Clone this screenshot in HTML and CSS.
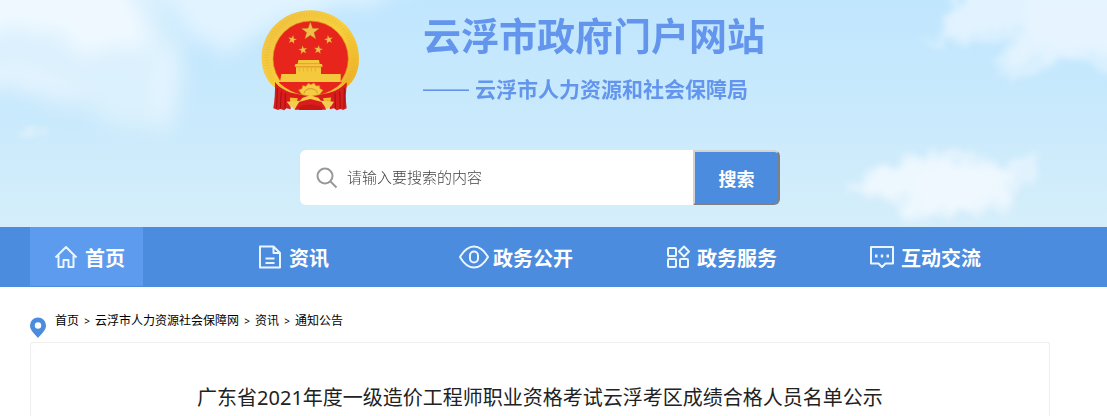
FILE: index.html
```
<!DOCTYPE html>
<html lang="zh-CN">
<head>
    <meta charset="UTF-8">
    <meta name="viewport" content="width=device-width, initial-scale=1.0">
    <title>云浮市人力资源和社会保障局</title>
    <link rel="stylesheet" href="styles.css">
</head>
<body>
    <header class="header">
        <svg class="sky" viewBox="0 0 1107 227" preserveAspectRatio="xMidYMin slice" aria-hidden="true">
            <defs>
                <filter id="haze" x="-30%" y="-30%" width="160%" height="160%">
                    <feTurbulence type="fractalNoise" baseFrequency="0.02" numOctaves="3" seed="8" result="noise"/>
                    <feDisplacementMap in="SourceGraphic" in2="noise" scale="40" xChannelSelector="R" yChannelSelector="G"/>
                    <feGaussianBlur stdDeviation="10"/>
                </filter>
                <filter id="cloud" x="-20%" y="-20%" width="140%" height="140%">
                    <feTurbulence type="fractalNoise" baseFrequency="0.07" numOctaves="4" seed="4" result="noise"/>
                    <feDisplacementMap in="SourceGraphic" in2="noise" scale="26" xChannelSelector="R" yChannelSelector="G"/>
                    <feGaussianBlur stdDeviation="3"/>
                </filter>
            </defs>
            <!-- left cloud -->
            <g filter="url(#haze)">
                <path d="M-60 -60H150L170 20L182 50L188 95L170 125L110 118L70 105L20 95L-60 88Z" fill="#e0f2fd" opacity=".8"/>
                <path d="M-60 -60H75L135 10L155 45L120 58L75 40L25 30L-60 30Z" fill="#f5faff" opacity=".8"/>
                <path d="M-60 60L30 68L90 90L60 100L-60 84Z" fill="#eef6ff" opacity=".5"/>
                <path d="M140 -60H420V-10L290 15L225 52L190 35Z" fill="#e8f6ff" opacity=".8"/>
                <ellipse cx="166" cy="80" rx="12" ry="30" fill="#f0f8ff" opacity=".5"/>
            </g>
            <ellipse cx="34" cy="132" rx="12" ry="5" fill="#e3f1fc" opacity=".8" filter="url(#cloud)"/>
            <!-- right clouds -->
            <g fill="#eef8ff" filter="url(#cloud)">
                <path d="M970 -30H1160V72L1090 68L1060 60L1030 74L1003 78L994 56L1018 42L1000 42L920 44L945 32L945 20Z" opacity=".5"/>
                <path d="M985 -30H1160V56H1040L1006 66L1022 40L1030 24L985 30L948 32L950 18Z" opacity=".5"/>
                <path d="M1040 -30H1160V45L1060 48L1020 30Z" opacity=".4"/>
            </g>
            <g fill="#f4faff" filter="url(#cloud)">
                <path d="M848 196L856 180L878 164L900 166L908 150L930 152L965 156L982 154L998 164L1015 158L1034 152L1036 172L1018 192L1008 212L985 214L960 212L930 222L900 222L898 202L872 198Z" opacity=".5"/>
                <path d="M856 188L880 168L915 158L950 160L990 164L1015 170L1005 202L960 208L905 216L908 196Z" opacity=".6"/>
                <path d="M920 170L975 168L1000 180L980 200L925 206Z" opacity=".5"/>
            </g>
        </svg>

        <div class="wrap">
            <div class="brand">
                <svg class="emblem" viewBox="33 30 294 303" role="img" aria-label="国徽">
                    <defs>
                        <linearGradient id="gold" x1="0" y1="0" x2="1" y2="1">
                            <stop offset="0" stop-color="#efc044"/>
                            <stop offset=".5" stop-color="#f8cf3c"/>
                            <stop offset="1" stop-color="#e9a921"/>
                        </linearGradient>
                        <polygon id="star" points="0,-10 2.4,-3.2 9.5,-3.1 3.9,1.3 5.9,8.1 0,4.1 -5.9,8.1 -3.9,1.3 -9.5,-3.1 -2.4,-3.2"/>
                    </defs>
                    <path d="M181 31C262 31 327 95 327 174C327 215 313 243 290 262L250 308H112L73 262C48 240 35 211 35 174C35 95 100 31 181 31Z" fill="url(#gold)"/>
                    <circle cx="181" cy="174" r="130" fill="none" stroke="#d79a22" stroke-width="14" stroke-dasharray="2 6" opacity=".25"/>
                    <circle cx="182" cy="176" r="113" fill="#e8251d" stroke="#d99a20" stroke-width="2"/>
                    <g fill="#eec04a" stroke="#b77a1c" stroke-width=".4">
                        <use href="#star" transform="translate(181 94) scale(2.8)"/>
                        <use href="#star" transform="translate(127 119) rotate(12) scale(1.35)"/>
                        <use href="#star" transform="translate(236 119) rotate(-12) scale(1.35)"/>
                        <use href="#star" transform="translate(159 150) rotate(-8) scale(1.35)"/>
                        <use href="#star" transform="translate(205 149) rotate(8) scale(1.35)"/>
                    </g>
                    <!-- gate tower -->
                    <g fill="#f5c93d">
                        <path d="M145 180H207L209 192H143Z"/>
                        <path d="M136 192H216L218 200H134Z"/>
                        <path d="M138 200H213V223H138Z"/>
                        <path d="M94 222H272V246H90Z"/>
                    </g>
                    <path d="M136 201H216M142 191H210" stroke="#d2931f" stroke-width="2"/>
                    <path d="M148 204V214M160 204V214M172 204V214M184 204V214M196 204V214" stroke="#dda52c" stroke-width="2"/>
                    <path d="M86 246H276L250 280L212 288H150L108 278Z" fill="#e8251d"/>
                    <path d="M85 247Q120 278 160 286L148 305L98 285Z" fill="#f2bc36"/>
                    <path d="M278 247Q244 278 204 286L216 305L262 285Z" fill="#f2bc36"/>
                    <!-- gear and red drapery -->
                    <path d="M75 247Q92 269 123 278Q155 286 181 286Q210 286 238 278Q268 270 290 248L288 280L252 292Q216 294 181 301Q145 294 108 292L77 280Z" fill="#d91b1b"/>
                    <path d="M146 270L156 266L158 257L168 259L175 250L183 254L192 249L198 258L208 257L210 266L219 271L208 284L182 289L156 284Z" fill="#f7cb45" stroke="#d4941f" stroke-width="2"/>
                    <path d="M162 280A20 14 0 0 1 202 280" fill="none" stroke="#d4941f" stroke-width="3"/>
                    <path d="M75 247Q92 270 119 279L122 328L109 325L103 331L91 327L84 330L70 325Q76 290 75 247Z" fill="#d81d1c"/>
                    <path d="M290 247Q270 270 245 279L239 328L252 325L260 331L272 327L279 330L290 325Q285 290 290 247Z" fill="#d81d1c"/>
                    <path d="M82 265L80 325M94 274L91 325M106 280L105 326M283 265L282 325M269 274L271 325M255 280L256 326" stroke="#9e1111" stroke-width="3" fill="none"/>
                    <path d="M146 286Q181 302 217 286L228 329H134Z" fill="#d81d1c"/>
                    <path d="M110 305L150 302L134 328L120 318Z" fill="#f3cd52"/>
                    <path d="M252 305L212 302L230 328L244 318Z" fill="#f3cd52"/>
                    <path d="M158 293L181 286L205 293L216 306L181 297L146 306Z" fill="#f7cb45"/>
                    <path d="M146 322Q181 305 218 322L216 330H148Z" fill="#c91615"/>
                </svg>
                <div class="brand-text">
                    <h1 class="site-name">云浮市政府门户网站</h1>
                    <p class="bureau"><span class="dash">——</span><span>云浮市人力资源和社会保障局</span></p>
                </div>
            </div>

            <form class="search">
                <label class="search-box" for="keyword">
                    <svg class="search-icon" viewBox="0 0 22 22" role="img" aria-label="搜索内容">
                        <circle cx="9" cy="9" r="7.5"/>
                        <path d="M14.5 14.5L20.5 20.5"/>
                    </svg>
                    <input id="keyword" type="text" placeholder="请输入要搜索的内容">
                </label>
                <button class="search-btn" type="button">搜索</button>
            </form>
        </div>
    </header>

    <nav class="nav">
        <ul class="nav-list wrap">
            <li>
                <a class="nav-link active" href="#">
                    <svg class="nav-icon" viewBox="0 0 24 24"><path d="M1.500 12.500L12 2L22.500 12.500M4.500 10.500V22H9.500V15H14.500V22H19.500V10.500"/></svg>
                    <span>首页</span>
                </a>
            </li>
            <li>
                <a class="nav-link" href="#">
                    <svg class="nav-icon" viewBox="0 0 24 24"><path d="M2 1.500H15.500L22 8V22.500H2ZM15.500 1.500V8H22M7.500 13.500H16.500M7.500 18H16.500"/></svg>
                    <span>资讯</span>
                </a>
            </li>
            <li>
                <a class="nav-link has-eye" href="#">
                    <svg class="nav-icon eye" viewBox="0 0 30 24"><path d="M1 12Q7 1.500 15 1.500T29 12Q23 22.500 15 22.500T1 12Z"/><rect x="11" y="6.500" width="8" height="11" rx="4"/></svg>
                    <span>政务公开</span>
                </a>
            </li>
            <li>
                <a class="nav-link" href="#">
                    <svg class="nav-icon" viewBox="0 0 24 24"><rect x="2" y="3" width="8" height="8" rx="1"/><rect x="2" y="14" width="8" height="8" rx="1"/><rect x="14" y="14" width="8" height="8" rx="1"/><path d="M18 1.500L23 6.500L18 11.500L13 6.500Z"/></svg>
                    <span>政务服务</span>
                </a>
            </li>
            <li>
                <a class="nav-link" href="#">
                    <svg class="nav-icon" viewBox="0 0 24 24"><path d="M1 2H23V18.500H15.500L12 22L8.500 18.500H1Z"/><path class="dots" d="M5 11H7.500M10.800 11H13.200M16.500 11H19"/></svg>
                    <span>互动交流</span>
                </a>
            </li>
        </ul>
    </nav>

    <main class="wrap">
        <div class="crumbs">
            <svg class="pin" viewBox="0 0 16 21" aria-hidden="true">
                <path d="M8 0.500A8 8 0 0 1 16 8.500C16 13 12 16.500 8 21C4 16.500 0 13 0 8.500A8 8 0 0 1 8 0.500Z" fill="#4c8cdd"/>
                <circle cx="8" cy="8.500" r="3.200" fill="#fff"/>
            </svg>
            <a href="#">首页</a>
            <span class="sep">&gt;</span>
            <a href="#">云浮市人力资源社会保障网</a>
            <span class="sep">&gt;</span>
            <a href="#">资讯</a>
            <span class="sep">&gt;</span>
            <a href="#">通知公告</a>
        </div>

        <article class="article">
            <h2 class="article-title">广东省2021年度一级造价工程师职业资格考试云浮考区成绩合格人员名单公示</h2>
        </article>
    </main>
</body>
</html>
```
FILE: styles.css
```
* {
    box-sizing: border-box;
}
body {
    margin: 0;
    background: #fff;
    color: #222;
    font-family: "Noto Sans", "Noto Sans CJK SC", sans-serif;
}
a {
    color: inherit;
    text-decoration: none;
}
h1, h2, p, ul {
    margin: 0;
    padding: 0;
    font-weight: normal;
}
.wrap {
    max-width: 1020px;
    margin: 0 30px;
}

/* header */
.header {
    position: relative;
    overflow: hidden;
    padding: 10px 0 22px;
    background: linear-gradient(#c0e6fe, #caeafc 55%, #d5eefa);
}
.sky {
    position: absolute;
    top: 0;
    left: 0;
    width: 100%;
    height: 100%;
}
.header .wrap {
    position: relative;
}
.brand {
    display: flex;
    justify-content: center;
    gap: 64px;
    padding-right: 54px;
}
.emblem {
    width: 98px;
    height: 101px;
}
.brand-text {
    color: #6495ed;
    font-family: "Noto Sans CJK SC", sans-serif;
}
.site-name {
    font-size: 38px;
    line-height: 48px;
    font-weight: bold;
}
.bureau {
    display: flex;
    gap: 6px;
    margin-top: 14px;
    font-size: 21px;
    line-height: 32px;
    font-weight: bold;
}
.dash {
    font-family: "Liberation Sans", sans-serif;
    font-size: 23px;
    font-weight: normal;
}

/* search */
.search {
    display: flex;
    width: 480px;
    max-width: 100%;
    height: 55px;
    margin: 39px auto 0;
}
.search-box {
    display: flex;
    flex: 1;
    align-items: center;
    gap: 9px;
    padding-left: 16px;
    background: #fff;
    border-radius: 6px 0 0 6px;
}
.search-icon {
    width: 22px;
    height: 22px;
    fill: none;
    stroke: #999;
    stroke-width: 2;
}
.search-box input {
    flex: 1;
    min-width: 0;
    padding: 0 0 2px;
    border: 0;
    outline: 0;
    background: none;
    font: 300 15px/24px "Noto Sans CJK SC", sans-serif;
}
.search-box input::placeholder {
    color: #444;
}
.search-btn {
    width: 87px;
    padding: 0;
    border: 2px solid;
    border-color: #d3d3d3 #808080 #808080 #d3d3d3;
    border-radius: 0 6px 6px 0;
    background: #4c8cdf;
    color: #fff;
    font: bold 18px/24px "Noto Sans CJK SC", sans-serif;
}

/* nav */
.nav {
    background: #4b8cdf;
}
.nav-list {
    display: grid;
    grid-template-columns: repeat(5, 1fr);
    height: 60px;
    list-style: none;
}
.nav-link {
    display: inline-flex;
    align-items: center;
    gap: 7px;
    height: 59px;
    padding: 0 18px 0 24px;
    color: #fff;
    font-size: 20px;
    line-height: 30px;
    font-weight: bold;
    white-space: nowrap;
}
.nav-link span {
    padding-top: 4px;
}
.nav-link.active {
    background: #5d9bee;
}
.nav-link.has-eye {
    gap: 4px;
    padding-left: 21px;
}
.nav-icon {
    width: 24px;
    height: 24px;
    fill: none;
    stroke: #e9f6ff;
    stroke-width: 2;
    stroke-linejoin: round;
}
.nav-icon.eye {
    width: 30px;
}
.dots {
    stroke-width: 3;
}

/* breadcrumb */
.crumbs {
    display: flex;
    align-items: center;
    height: 55px;
    padding-top: 12px;
    color: #000;
    font-size: 12px;
    line-height: 18px;
}
.pin {
    width: 16px;
    height: 21px;
    margin-right: 9px;
    align-self: flex-end;
    margin-bottom: 4px;
}
.sep {
    width: 16px;
    text-align: center;
    font-size: 10px;
}

.article {
    padding: 37px 20px 0;
    border: 1px solid #eee;
    border-bottom: 0;
    border-radius: 3px 3px 0 0;
}
.article-title {
    font-size: 20px;
    line-height: 36px;
    text-align: center;
}
```
